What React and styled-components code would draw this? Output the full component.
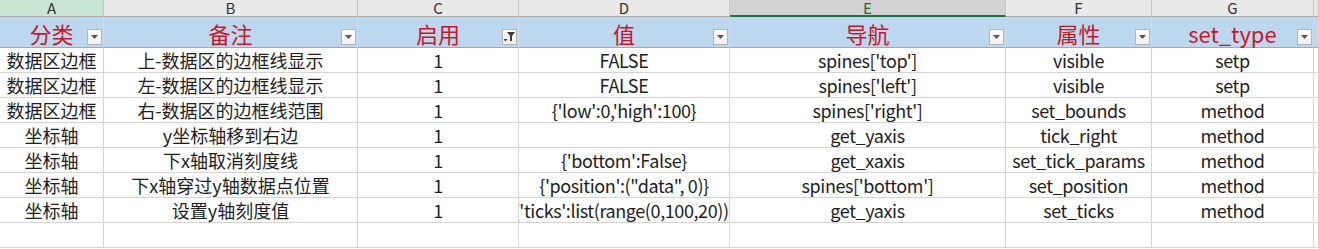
import React from "react";
import styled, { createGlobalStyle } from "styled-components";

const Global = createGlobalStyle`
  html, body { margin: 0; padding: 0; background: #fff; overflow: hidden; }
  body { font-family: "Noto Sans CJK SC", "Noto Sans", sans-serif; }
`;

const COLS = "104px 254px 161px 211px 276px 146px 162px 1fr";

const Sheet = styled.div`
  display: grid;
  grid-template-columns: ${COLS};
  grid-template-rows: 17px 31px;
  grid-auto-rows: 25px;
  width: 1319px;
`;

const ColHead = styled.div`
  height: 17px;
  box-sizing: border-box;
  border-right: 1px solid #c6c6c6;
  border-bottom: ${(p) => (p.$selected ? "2px solid #217346" : "1px solid #a9a9a9")};
  background: ${(p) => (p.$active ? "#c8e6d1" : p.$selected ? "#d2d2d2" : "#e9e9e9")};
  color: ${(p) => (p.$selected ? "#1f6b3f" : "#333")};
  font-family: "Noto Sans CJK SC", sans-serif;
  font-size: 15px;
  line-height: 16px;
  display: flex;
  justify-content: center;
  align-items: flex-start;
`;

const HeadCell = styled.div`
  height: 31px;
  box-sizing: border-box;
  background: #bdd7ee;
  border-right: 1px solid #d0dbe6;
  border-bottom: 1px solid #9fa9b3;
  display: grid;
  grid-template-columns: 1fr;
  grid-template-rows: 1fr;
`;

const HeadTitle = styled.span`
  grid-area: 1 / 1;
  justify-self: center;
  align-self: end;
  color: #c8162a;
  font-size: 22px;
  line-height: 26px;
  margin-bottom: 1px;
  white-space: nowrap;
`;

const FilterBtn = styled.span`
  grid-area: 1 / 1;
  justify-self: end;
  align-self: end;
  width: 15px;
  height: 16px;
  margin: 0 1px 2px 0;
  box-sizing: border-box;
  border: 1px solid #b5b5b5;
  background: linear-gradient(#ffffff, #f1f1f1);
  display: flex;
  align-items: center;
  justify-content: center;
`;

const Cell = styled.div`
  height: 25px;
  box-sizing: border-box;
  border-right: 1px solid #d4d4d4;
  border-bottom: 1px solid #d4d4d4;
  display: flex;
  align-items: center;
  justify-content: center;
  overflow: hidden;
  white-space: nowrap;
  font-size: 18px;
  color: #1e1e1e;
  line-height: 24px;
  letter-spacing: ${(p) => (p.$latin ? "-0.4px" : "0")};
`;

const Arrow = () => (
  <svg width="7" height="4" viewBox="0 0 7 4">
    <path d="M0 0 H7 L3.5 4 Z" fill="#555" />
  </svg>
);

const Funnel = () => (
  <svg width="13" height="12" viewBox="0 0 13 12">
    <path d="M4 1 H12 L9 5 V10 H7 V5 Z" fill="#3d3d3d" />
    <path d="M0.5 8 H4.5 L2.5 10.5 Z" fill="#3d3d3d" />
  </svg>
);

const letters = ["A", "B", "C", "D", "E", "F", "G", ""];
const headers = ["分类", "备注", "启用", "值", "导航", "属性", "set_type"];

const rows = [
  ["数据区边框", "上-数据区的边框线显示", "1", "FALSE", "spines['top']", "visible", "setp"],
  ["数据区边框", "左-数据区的边框线显示", "1", "FALSE", "spines['left']", "visible", "setp"],
  ["数据区边框", "右-数据区的边框线范围", "1", "{'low':0,'high':100}", "spines['right']", "set_bounds", "method"],
  ["坐标轴", "y坐标轴移到右边", "1", "", "get_yaxis", "tick_right", "method"],
  ["坐标轴", "下x轴取消刻度线", "1", "{'bottom':False}", "get_xaxis", "set_tick_params", "method"],
  ["坐标轴", "下x轴穿过y轴数据点位置", "1", "{'position':(\"data\", 0)}", "spines['bottom']", "set_position", "method"],
  ["坐标轴", "设置y轴刻度值", "1", "{'ticks':list(range(0,100,20))}", "get_yaxis", "set_ticks", "method"],
  ["", "", "", "", "", "", ""],
];

const isLatin = (s) => /^[\x00-\x7f]+$/.test(s);

export default function App() {
  return (
    <>
      <Global />
      <Sheet>
        {letters.map((l, i) => (
          <ColHead key={"c" + i} $active={i === 0} $selected={i === 4}>
            {l}
          </ColHead>
        ))}
        {headers.map((h, i) => (
          <HeadCell key={"h" + i}>
            <HeadTitle>{h}</HeadTitle>
            <FilterBtn>{i === 2 ? <Funnel /> : <Arrow />}</FilterBtn>
          </HeadCell>
        ))}
        <HeadCell />
        {rows.map((r, ri) => (
          <React.Fragment key={"r" + ri}>
            {r.map((v, ci) => (
              <Cell key={ci} $latin={isLatin(v)}>
                {v}
              </Cell>
            ))}
            <Cell />
          </React.Fragment>
        ))}
      </Sheet>
    </>
  );
}
